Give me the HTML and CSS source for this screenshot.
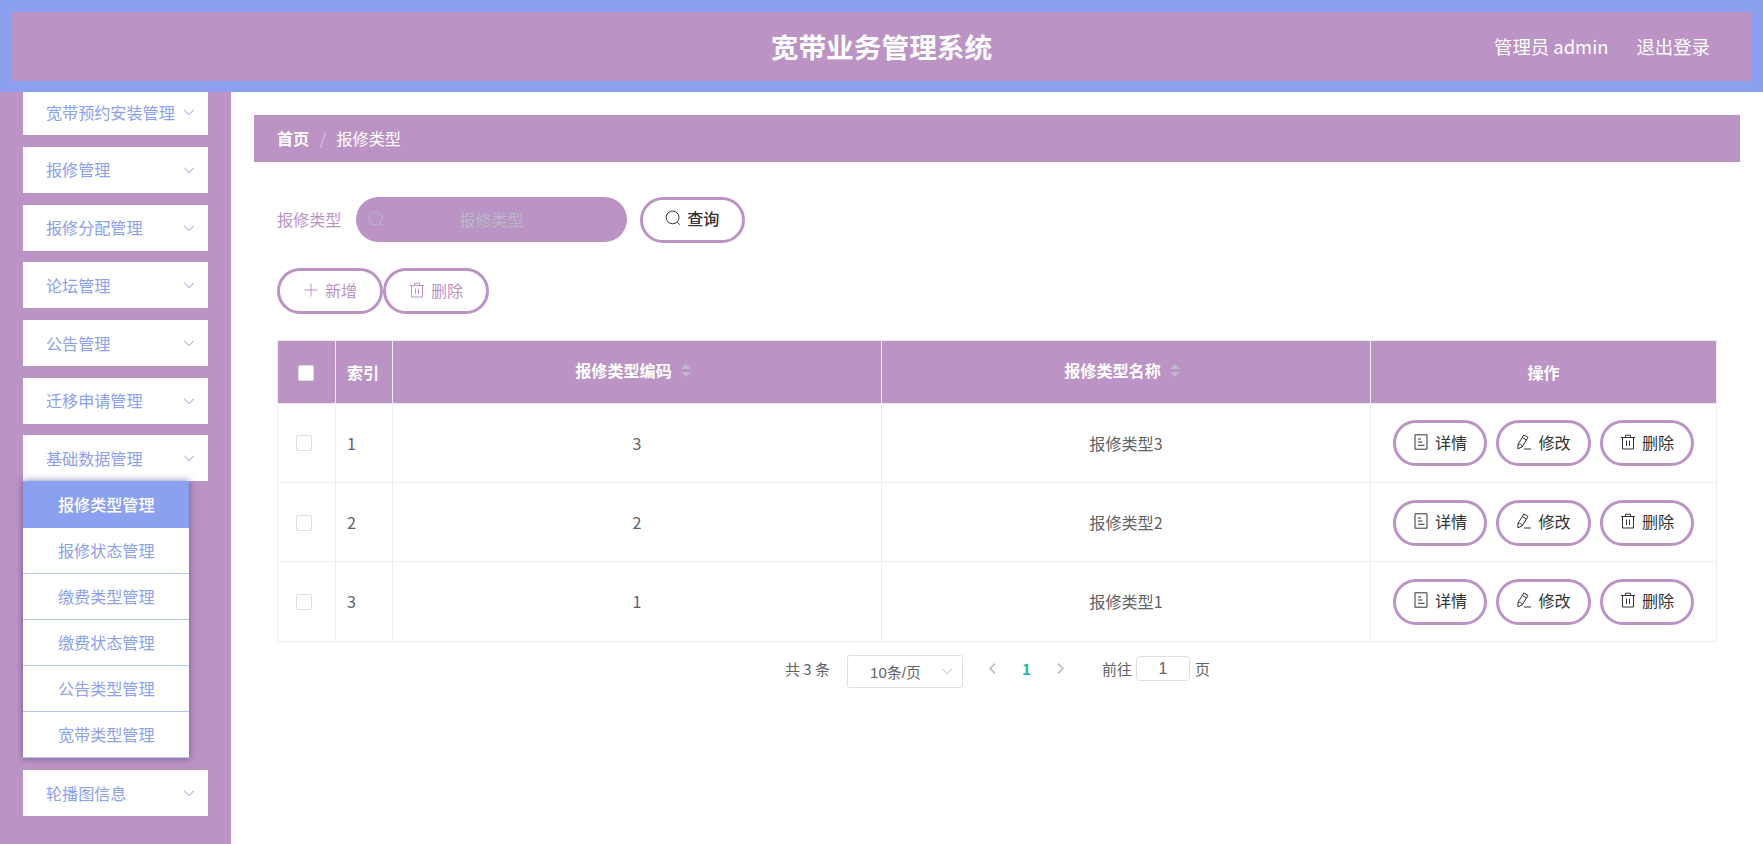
FILE: index.html
```html
<!DOCTYPE html>
<html lang="zh-CN">
<head>
  <meta charset="UTF-8">
  <meta name="viewport" content="width=device-width, initial-scale=1.0">
  <title>宽带业务管理系统</title>
  <link rel="stylesheet" href="styles.css">
</head>
<body>

<!-- Icons -->
<svg class="icon-defs" width="0" height="0">
  <symbol id="icon-down" viewBox="0 0 16 16"><path d="M3.2 5.8 8 10.6l4.8-4.8"/></symbol>
  <symbol id="icon-left" viewBox="0 0 16 16"><path d="M10.6 2.8 5.4 8l5.2 5.2"/></symbol>
  <symbol id="icon-right" viewBox="0 0 16 16"><path d="M5.4 2.8 10.6 8l-5.2 5.2"/></symbol>
  <symbol id="icon-search" viewBox="0 0 16 16"><circle cx="7.6" cy="7.4" r="6.4"/><path d="m12.2 12 2.600 2.600"/></symbol>
  <symbol id="icon-plus" viewBox="0 0 16 16"><path d="M8 1.5v13M1.5 8h13"/></symbol>
  <symbol id="icon-delete" viewBox="0 0 16 16"><path d="M1 3.5h14M2.5 3.500v11.500h11V3.500M5.500 3.300V1.200h5v2.100M6.500 6.500v5.500M9.500 6.500v5.500"/></symbol>
  <symbol id="icon-tickets" viewBox="0 0 16 16"><path d="M2 .8h12v14.400H2zM5 5h3M5 8h4.500M5 11.300h6.500"/></symbol>
  <symbol id="icon-edit" viewBox="0 0 16 16"><path d="m7.800 1 4.200 2.400-5.800 9.500-4.300 1.900.1-4.500zM6.300 3.500l4.200 2.500M2 10.300c2-.3 3.900.8 4.200 2.600M8 15h7"/></symbol>
</svg>

<header class="header">
  <h1 class="title">宽带业务管理系统</h1>
  <div class="user">
    <span>管理员 admin</span>
    <span>退出登录</span>
  </div>
</header>

<div class="main">
  <aside class="sidebar">
    <ul class="menu">
      <li class="menu-item">宽带预约安装管理<svg class="icon"><use href="#icon-down"/></svg></li>
      <li class="menu-item">报修管理<svg class="icon"><use href="#icon-down"/></svg></li>
      <li class="menu-item">报修分配管理<svg class="icon"><use href="#icon-down"/></svg></li>
      <li class="menu-item">论坛管理<svg class="icon"><use href="#icon-down"/></svg></li>
      <li class="menu-item">公告管理<svg class="icon"><use href="#icon-down"/></svg></li>
      <li class="menu-item">迁移申请管理<svg class="icon"><use href="#icon-down"/></svg></li>
      <li class="menu-item open">基础数据管理<svg class="icon"><use href="#icon-down"/></svg></li>
      <li>
        <ul class="submenu">
          <li class="active">报修类型管理</li>
          <li>报修状态管理</li>
          <li>缴费类型管理</li>
          <li>缴费状态管理</li>
          <li>公告类型管理</li>
          <li>宽带类型管理</li>
        </ul>
      </li>
      <li class="menu-item">轮播图信息<svg class="icon"><use href="#icon-down"/></svg></li>
    </ul>
  </aside>

  <div class="content">
    <div class="breadcrumb"><b>首页</b><span class="separator">/</span><span>报修类型</span></div>

    <div class="search">
      <label>报修类型</label>
      <div class="search-input">
        <svg class="icon"><use href="#icon-search"/></svg>
        <span>报修类型</span>
      </div>
      <button class="btn dark"><svg class="icon"><use href="#icon-search"/></svg>查询</button>
    </div>

    <div class="toolbar">
      <button class="btn"><svg class="icon"><use href="#icon-plus"/></svg>新增</button>
      <button class="btn"><svg class="icon"><use href="#icon-delete"/></svg>删除</button>
    </div>

    <table>
      <colgroup>
        <col class="col-check">
        <col class="col-index">
        <col class="col-data">
        <col>
        <col class="col-action">
      </colgroup>
      <thead>
        <tr>
          <th><span class="checkbox"></span></th>
          <th class="index">索引</th>
          <th><div class="sortable">报修类型编码<span class="sort"></span></div></th>
          <th><div class="sortable">报修类型名称<span class="sort"></span></div></th>
          <th>操作</th>
        </tr>
      </thead>
      <tbody>
        <tr>
          <td><span class="checkbox"></span></td>
          <td class="index">1</td>
          <td>3</td>
          <td>报修类型3</td>
          <td>
            <div class="actions">
              <button class="btn dark"><svg class="icon"><use href="#icon-tickets"/></svg>详情</button>
              <button class="btn dark"><svg class="icon"><use href="#icon-edit"/></svg>修改</button>
              <button class="btn dark"><svg class="icon"><use href="#icon-delete"/></svg>删除</button>
            </div>
          </td>
        </tr>
        <tr>
          <td><span class="checkbox"></span></td>
          <td class="index">2</td>
          <td>2</td>
          <td>报修类型2</td>
          <td>
            <div class="actions">
              <button class="btn dark"><svg class="icon"><use href="#icon-tickets"/></svg>详情</button>
              <button class="btn dark"><svg class="icon"><use href="#icon-edit"/></svg>修改</button>
              <button class="btn dark"><svg class="icon"><use href="#icon-delete"/></svg>删除</button>
            </div>
          </td>
        </tr>
        <tr>
          <td><span class="checkbox"></span></td>
          <td class="index">3</td>
          <td>1</td>
          <td>报修类型1</td>
          <td>
            <div class="actions">
              <button class="btn dark"><svg class="icon"><use href="#icon-tickets"/></svg>详情</button>
              <button class="btn dark"><svg class="icon"><use href="#icon-edit"/></svg>修改</button>
              <button class="btn dark"><svg class="icon"><use href="#icon-delete"/></svg>删除</button>
            </div>
          </td>
        </tr>
      </tbody>
    </table>

    <div class="pagination">
      <span class="total">共 3 条</span>
      <div class="page-size"><span>10条/页</span><svg class="icon"><use href="#icon-down"/></svg></div>
      <svg class="icon arrow"><use href="#icon-left"/></svg>
      <b class="current">1</b>
      <svg class="icon arrow"><use href="#icon-right"/></svg>
      <span class="jump">前往</span>
      <span class="page-input">1</span>
      <span>页</span>
    </div>
  </div>
</div>

</body>
</html>
```

FILE: styles.css
```css
* {
  box-sizing: border-box;
}

body {
  margin: 0;
  height: 100vh;
  overflow: hidden;
  display: flex;
  flex-direction: column;
  font-family: "Noto Sans CJK SC", sans-serif;
  font-size: 16.1px;
  color: #606266;
  background-color: #fff;
}

ul {
  list-style: none;
  margin: 0;
  padding: 0;
}

.icon-defs {
  position: absolute;
}

.icon {
  width: 16px;
  height: 16px;
  flex: none;
  fill: none;
  stroke: currentColor;
  stroke-width: 1;
}

/* Header */
.header {
  flex: none;
  height: 92px;
  border: 12px solid #8ba0ee;
  border-bottom-width: 11px;
  background-color: #bb93c5;
  color: #fff;
  display: grid;
  grid-template-columns: 1fr auto 1fr;
  align-items: center;
  padding-bottom: 2px;
}

.title {
  grid-column: 2;
  margin: 0;
  font-size: 27.7px;
  line-height: 40px;
}

.user {
  display: flex;
  justify-content: flex-end;
  gap: 28px;
  padding-right: 41px;
  font-size: 18.4px;
  line-height: 28px;
}

.main {
  flex: 1;
  min-height: 0;
  display: flex;
}

/* Sidebar */
.sidebar {
  width: 231px;
  flex: none;
  overflow: hidden;
  background-color: #bb93c5;
}

.menu {
  margin: -2.8px 23px 0;
}

.menu-item {
  display: flex;
  align-items: center;
  justify-content: space-between;
  height: 46.15px;
  margin-bottom: 11.55px;
  padding: 0 11px 1px 23px;
  background-color: #fff;
  color: #8ba0ee;
  white-space: nowrap;
}

.menu-item .icon {
  margin-top: 1px;
  color: #8d9dcb;
}

.menu-item.open {
  margin-bottom: 0;
}

.submenu {
  width: 166px;
  margin-bottom: 12px;
  box-shadow: 0 0 7px rgba(40, 50, 110, 0.6);
  position: relative;
}

.submenu li {
  height: 46.15px;
  line-height: 45px;
  padding-left: 35px;
  background-color: #fff;
  border-bottom: 1px solid #b9c5f3;
  color: #8ba0ee;
}

.submenu li.active {
  background-color: #8ba0ee;
  border-color: #8ba0ee;
  color: #fff;
  font-weight: 500;
  line-height: 46px;
}

/* Content */
.content {
  flex: 1;
  padding: 23px 23px 0;
}

.breadcrumb {
  height: 46.5px;
  padding-left: 23px;
  display: flex;
  align-items: center;
  background-color: #bb93c5;
  color: #fff;
}

.separator {
  margin: 0 10.5px;
  color: #d2c9df;
}

.search {
  display: flex;
  align-items: center;
  height: 46px;
  margin: 35px 0 0 23px;
  color: #bb93c5;
}

.search label {
  padding-bottom: 1px;
}

.search-input {
  display: flex;
  align-items: center;
  width: 271px;
  height: 45px;
  margin: 0 13px 0 14.5px;
  padding: 0 12px 2px;
  border-radius: 23px;
  background-color: #bb93c5;
  color: #b8bac9;
}

.search-input span {
  flex: 1;
  text-align: center;
  padding-right: 16px;
}

.btn {
  display: flex;
  align-items: center;
  justify-content: center;
  gap: 6px;
  width: 106px;
  height: 46px;
  padding: 0 0 2px;
  border: 3px solid #bb93c5;
  border-radius: 23px;
  background-color: #fff;
  color: #bb93c5;
  font-family: inherit;
  font-size: 16.1px;
  cursor: pointer;
}

.btn.dark {
  color: #333;
}

.search .btn {
  width: 105px;
  padding-bottom: 3px;
  font-weight: 500;
}

.toolbar {
  display: flex;
  margin: 25px 0 26px 23px;
}

/* Table */
table {
  width: 1440px;
  margin-left: 23px;
  table-layout: fixed;
  border-spacing: 0;
  border: 1px solid #ebeef5;
  border-width: 1px 0 0 1px;
}

.col-check {
  width: 58px;
}

.col-index {
  width: 57px;
}

.col-data {
  width: 489px;
}

.col-action {
  width: 346px;
}

th,
td {
  padding: 0;
  text-align: center;
  border: 1px solid #ebeef5;
  border-width: 0 1px 1px 0;
}

th {
  height: 63px;
  background-color: #bb93c5;
  color: #fff;
}

td {
  height: 79.4px;
}

.index {
  text-align: left;
  padding-left: 11px;
}

.checkbox {
  display: block;
  width: 16px;
  height: 16px;
  margin: 1px auto 0 18px;
  border: 1px solid #dcdfe6;
  border-radius: 2px;
  background-color: #fff;
}

th .checkbox {
  margin: 2px auto 0 20px;
}

.sortable {
  display: flex;
  align-items: center;
  justify-content: center;
  padding: 0 6px 4px 0;
}

.sort {
  margin: 1px 2px 0 9px;
}

.sort::before,
.sort::after {
  content: "";
  display: block;
  border: 5.5px solid transparent;
}

.sort::before {
  border-top: 0;
  border-bottom-color: #c0b9cb;
  margin-bottom: 3px;
}

.sort::after {
  border-bottom: 0;
  border-top-color: #c0b9cb;
}

.actions {
  display: flex;
  justify-content: center;
  gap: 9px;
  padding-top: 1px;
}

.actions .btn {
  width: 94.5px;
  padding-bottom: 3px;
}

/* Pagination */
.pagination {
  display: flex;
  align-items: center;
  height: 32px;
  margin: 11px 0 0 531px;
  font-size: 15px;
}

.page-size {
  display: flex;
  align-items: center;
  justify-content: space-between;
  width: 116px;
  height: 33px;
  margin: 5px 22px 0 17px;
  padding: 0 7px 0 22px;
  border: 1px solid #dcdfe6;
  border-radius: 3px;
  font-family: "Liberation Sans", "Noto Sans CJK SC", sans-serif;
}

.page-size .icon,
.arrow {
  color: #b4b8c0;
}

.arrow {
  width: 15px;
  height: 15px;
  stroke-width: 1.6;
}

.current {
  width: 53px;
  text-align: center;
  color: #18bc9c;
}

.jump {
  margin-left: 34px;
}

.page-input {
  width: 54px;
  height: 25px;
  margin: 0 5px 0 4px;
  line-height: 23px;
  text-align: center;
  border: 1px solid #dcdfe6;
  border-radius: 4px;
  font-family: "Liberation Sans", sans-serif;
  font-size: 16px;
}
```
